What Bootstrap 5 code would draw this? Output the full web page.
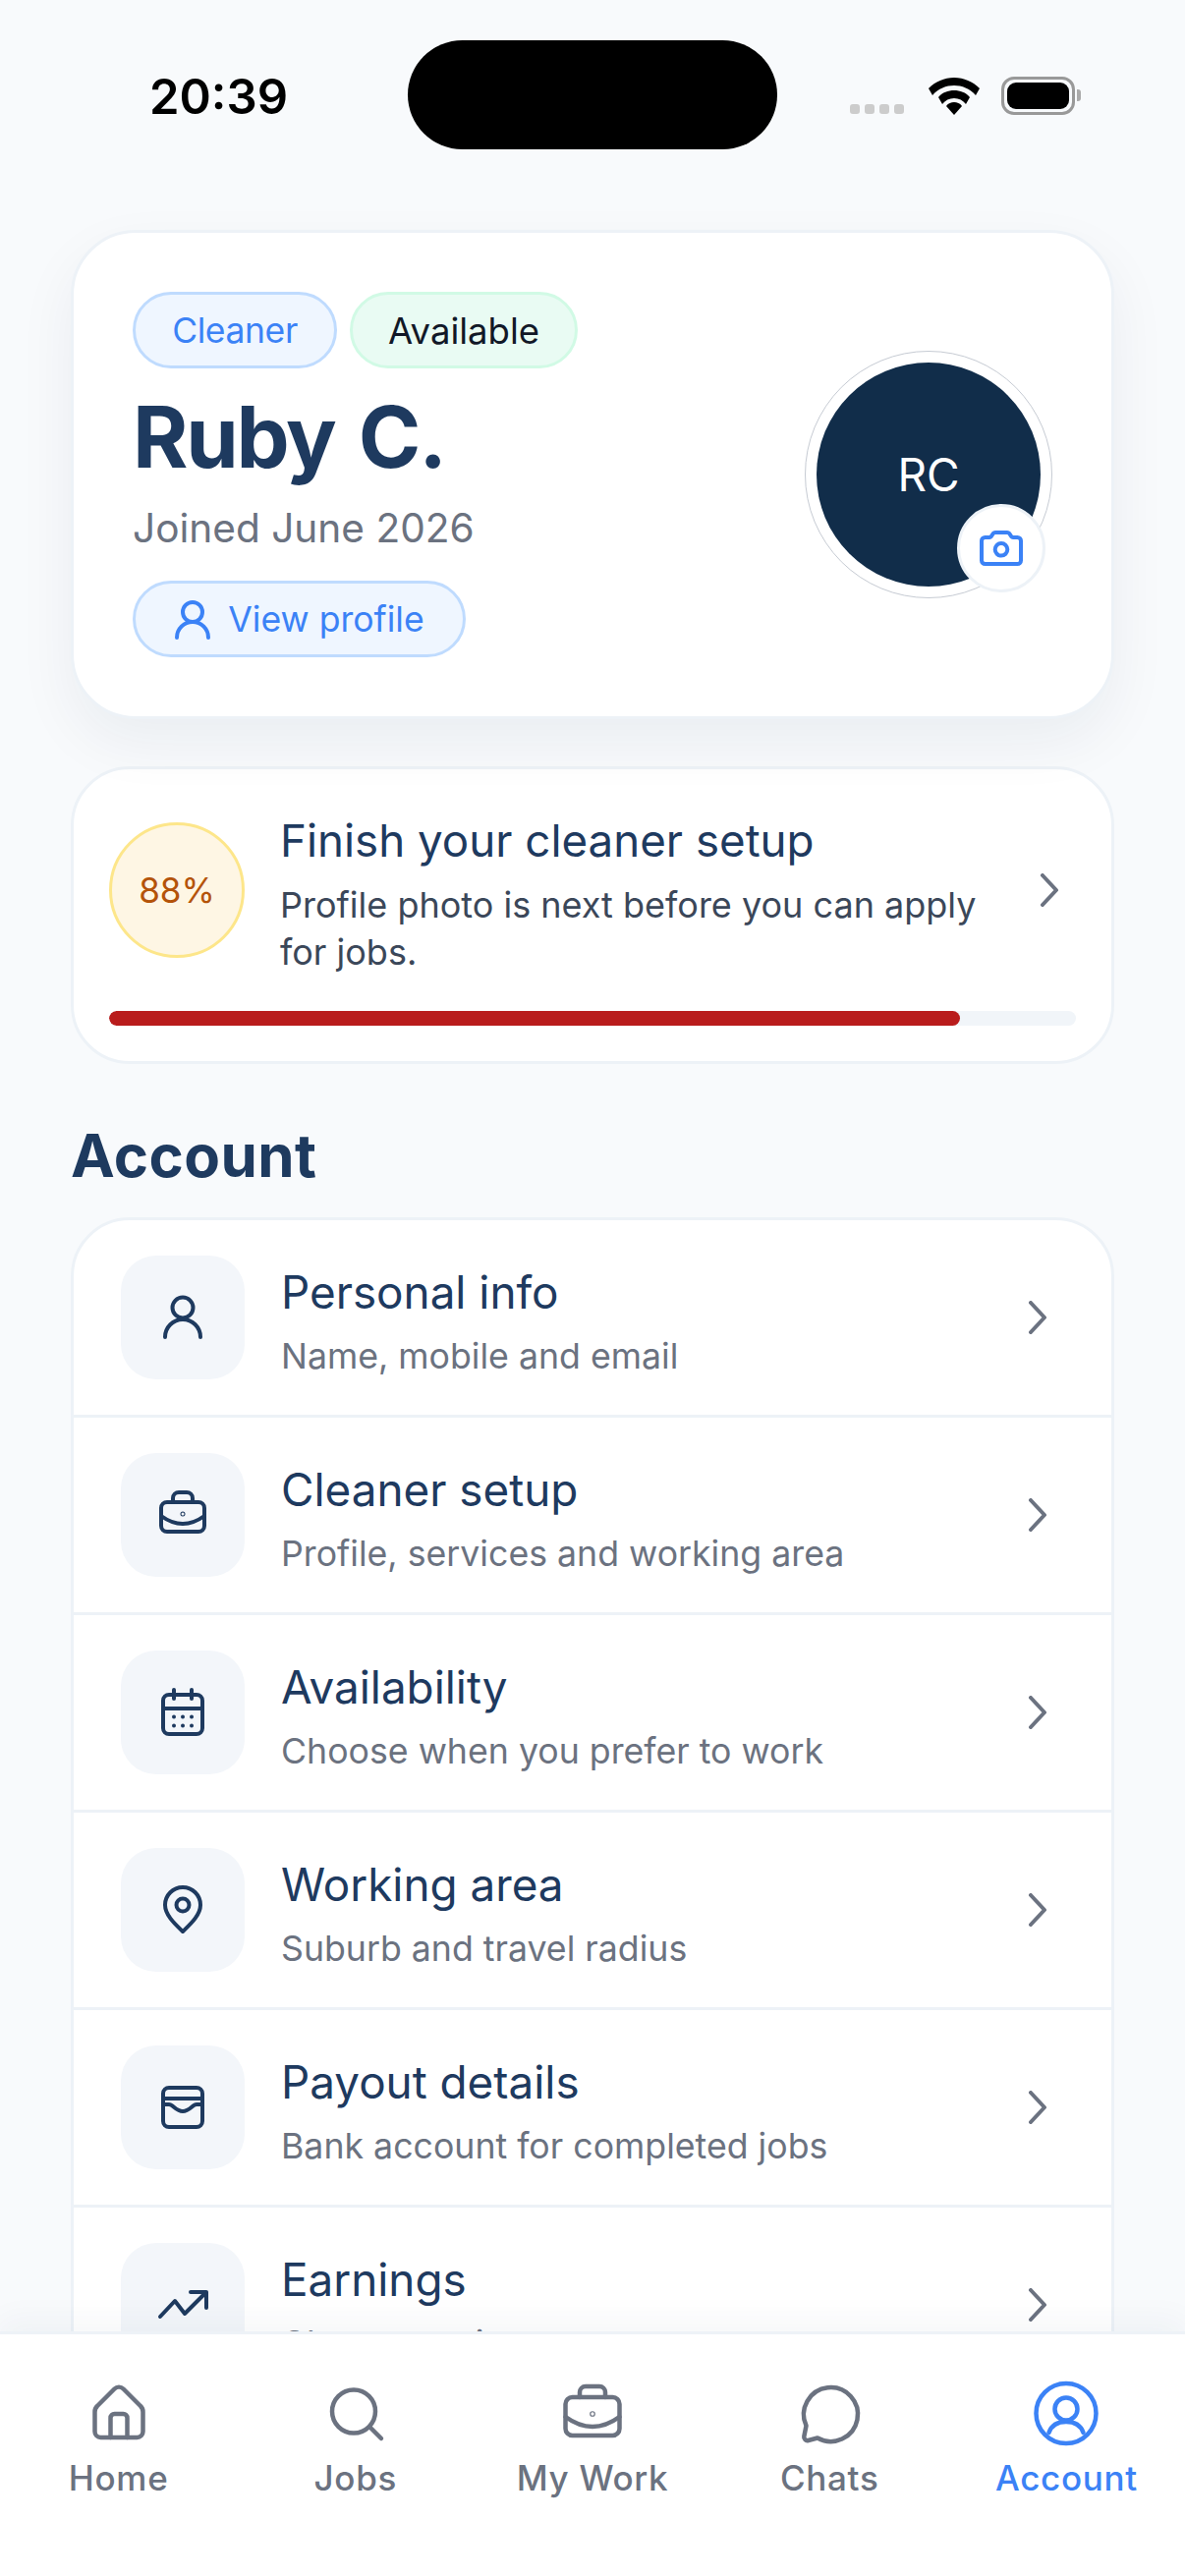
<!DOCTYPE html>
<html lang="en">
<head>
  <meta charset="UTF-8">
  <meta name="viewport" content="width=device-width, initial-scale=1.0">
  <title>Account</title>
  <link href="https://cdn.jsdelivr.net/npm/bootstrap@5.3.0/dist/css/bootstrap.min.css" rel="stylesheet">
  <style>
    body { background: #f8fafc; font-family: "Inter", "Liberation Sans", sans-serif; color: #1e3a5f; }
    svg { display: block; flex-shrink: 0; }
    .ico { fill: none; stroke: currentColor; stroke-width: 4; stroke-linecap: round; stroke-linejoin: round; }

    .phone { width: 1206px; height: 2622px; }
    .status-row { height: 160px; padding-top: 41px; }
    .time-slot { width: 415px; padding: 28px 0 0 152px; font-size: 49px; line-height: 60px; font-weight: 600; color: #000; }
    .island { width: 376px; height: 111px; border-radius: 56px; background: #000; }
    .status-icons { padding: 37px 0 0 74px; }
    .sig-dots { gap: 5px; margin: 28px 25px 0 0; }
    .sig-dots i { width: 10px; height: 10px; border-radius: 3px; background: #ccc; }
    .wifi { margin: 1px 22px 0 0; }
    .batt { width: 75px; height: 39px; border: 3px solid #999; border-radius: 13px; padding: 3px; }
    .batt i { display: block; height: 100%; background: #000; border-radius: 9px; }
    .batt-cap { width: 4px; height: 12px; margin: 13px 0 0 2px; background: #aaa; border-radius: 0 3px 3px 0; }

    .page-main { padding: 74px 72px 0; min-height: 0; }
    .hero { border: 3px solid #edf2f7; border-radius: 66px; padding: 60px; height: 498px; box-shadow: 0 24px 60px rgba(15, 42, 70, .06); margin-bottom: 48px; }
    .chip { display: inline-flex; align-items: center; justify-content: center; height: 78px; padding-top: 2px; border: 3px solid; border-radius: 39px; font-size: 36.5px; font-weight: 400; }
    .chip-blue { background: #eff6ff; border-color: #bfdbfe; color: #3b82f6; }
    .chip-green { background: #e9fbf3; border-color: #d1fae5; color: #111827; }
    .chip-role { width: 208px; font-size: 35.5px; letter-spacing: -.4px; }
    .chip-status { width: 232px; margin-left: 13px; }
    .chip-view { width: 339px; gap: 17px; font-size: 35.6px; }
    .hero-name { font-size: 86px; line-height: 100px; font-weight: 700; letter-spacing: -2.2px; word-spacing: 6px; margin: 20px 0 18px; color: #1e3a5f; }
    .hero-date { font-size: 40.6px; line-height: 50px; color: #6b7280; margin-bottom: 28px; }
    .avatar-ring { width: 252px; height: 252px; border: 1px solid #c6cbd3; border-radius: 50%; padding: 11px; }
    .avatar-disc { width: 100%; height: 100%; border-radius: 50%; background: #112d4a; color: #fff; font-size: 46px; }
    .cam-badge { width: 90px; height: 90px; right: 6px; bottom: 5px; background: #fff; border: 3px solid #edf2f7; border-radius: 50%; color: #3b82f6; }

    .setup-card { border: 3px solid #edf2f7; border-radius: 60px; background: #fff; padding: 43px 36px 36px; margin-bottom: 53px; }
    .pct { width: 138px; height: 138px; margin: 0 36px 7px 0; border: 3px solid #fde68a; border-radius: 50%; background: #fef6e4; color: #b45309; font-size: 35px; }
    .setup-title { font-size: 45.7px; line-height: 60px; margin-bottom: 11px; }
    .setup-sub { font-size: 36px; line-height: 48px; color: #3b4759; width: 744px; }
    .setup-chev { margin: 0 11px 7px auto; color: #6b7280; }
    .bar-track { height: 15px; margin-top: 36px; background: #f1f5f9; border-radius: 8px; }
    .bar-fill { background: #b91c1c; border-radius: 8px; }

    .section-head { font-size: 60px; line-height: 80px; font-weight: 700; letter-spacing: .4px; margin: 0 0 23px; color: #1e3a5f; }
    .menu-list { border: 3px solid #edf2f7; border-radius: 60px; background: #fff; }
    .menu-list .list-group-item { border: 0; border-bottom: 3px solid #edf2f7; background: transparent; padding: 36px 60px 36px 48px; height: 201px; display: flex; align-items: center; }
    .tile { width: 126px; height: 126px; border-radius: 36px; background: #f3f6fa; color: #1e3a5f; margin-right: 37px; }
    .row-text { padding-top: 7px; }
    .row-title { font-size: 45.8px; line-height: 60px; margin-bottom: 10px; color: #1e3a5f; }
    .row-sub { font-size: 35.7px; line-height: 48px; color: #6b7280; }
    .row-chev { margin-left: auto; color: #6b7280; }

    .tabbar { height: 249px; background: #fff; border-top: 3px solid #edf2f7; padding-top: 44px; box-shadow: 0 -12px 30px rgba(15, 42, 70, .04); }
    .tab { flex: 1 1 0; font-size: 35px; line-height: 44px; font-weight: 500; letter-spacing: .7px; color: #6b7280; }
    .tab span { margin-top: 8px; }
    .tab.is-active { color: #3b82f6; }
    .tab .ico { stroke-width: 4.5; }
  </style>
</head>
<body>
<div class="phone d-flex flex-column overflow-hidden">

  <div class="status-row d-flex flex-shrink-0">
    <div class="time-slot">20:39</div>
    <div class="island"></div>
    <div class="status-icons d-flex align-items-start">
      <div class="sig-dots d-flex"><i></i><i></i><i></i><i></i></div>
      <svg class="wifi" width="52" height="38" viewBox="0 0 52 38"><path d="M26 0C16 0 7 4 0 11l4 7C10 11 18 8 26 8s16 3 22 10l4-7C45 4 36 0 26 0Z"/><path d="M26 13c-6 0-12 2-16 7l4 7c3-4 7-6 12-6s9 2 12 6l4-7c-4-5-10-7-16-7Z"/><path d="M26 25c-3 0-6 1-8 4l8 9 8-9c-2-3-5-4-8-4Z"/></svg>
      <div class="d-flex">
        <div class="batt"><i></i></div>
        <div class="batt-cap"></div>
      </div>
    </div>
  </div>

  <main class="page-main flex-grow-1 overflow-hidden">
    <div class="card hero flex-row justify-content-between align-items-center">
      <div>
        <div class="d-flex">
          <span class="chip chip-blue chip-role">Cleaner</span>
          <span class="chip chip-green chip-status">Available</span>
        </div>
        <h1 class="hero-name">Ruby C.</h1>
        <div class="hero-date">Joined June 2026</div>
        <a class="chip chip-blue chip-view text-decoration-none">
          <svg class="ico" width="38" height="44" viewBox="0 0 38 44"><circle cx="19" cy="14" r="10"/><path d="M3 40a16 16 0 0 1 32 0"/></svg>
          <span>View profile</span>
        </a>
      </div>
      <div class="avatar-ring position-relative">
        <div class="avatar-disc d-flex align-items-center justify-content-center">RC</div>
        <div class="cam-badge position-absolute d-flex align-items-center justify-content-center">
          <svg class="ico" width="46" height="40" viewBox="0 0 46 40"><path d="M6.500 9H11a2 2 0 0 0 1.700-.9l2-3A3 3 0 0 1 17.200 4h11.600a3 3 0 0 1 2.500 1.100l2 3a2 2 0 0 0 1.700.9h4.500a3.500 3.500 0 0 1 3.500 3.500v20a3.500 3.500 0 0 1-3.500 3.500h-33A3.500 3.500 0 0 1 3 32.500v-20A3.500 3.500 0 0 1 6.500 9Z"/><circle cx="23" cy="21.300" r="6.300"/></svg>
        </div>
      </div>
    </div>

    <div class="setup-card">
      <div class="d-flex align-items-center">
        <div class="pct flex-shrink-0 d-flex align-items-center justify-content-center">88%</div>
        <div>
          <div class="setup-title">Finish your cleaner setup</div>
          <div class="setup-sub">Profile photo is next before you can apply for jobs.</div>
        </div>
        <svg class="ico setup-chev" width="30" height="34" viewBox="0 0 30 34"><path d="M7 2l14 15L7 32"/></svg>
      </div>
      <div class="progress bar-track">
        <div class="progress-bar bar-fill" style="width: 88%"></div>
      </div>
    </div>

    <h2 class="section-head">Account</h2>
    <div class="list-group menu-list">
      <div class="list-group-item">
        <div class="tile d-flex align-items-center justify-content-center">
          <svg class="ico" width="60" height="60" viewBox="0 0 60 60"><circle cx="30" cy="20" r="10.5"/><path d="M12 50a18 18 0 0 1 36 0"/></svg>
        </div>
        <div class="row-text"><div class="row-title">Personal info</div><div class="row-sub">Name, mobile and email</div></div>
        <svg class="ico row-chev" width="30" height="34" viewBox="0 0 30 34"><path d="M8 2l14 15L8 32"/></svg>
      </div>
      <div class="list-group-item">
        <div class="tile d-flex align-items-center justify-content-center">
          <svg class="ico" width="60" height="60" viewBox="0 0 60 60"><rect x="8" y="17" width="44" height="30" rx="6"/><path d="M20 17v-4a6 6 0 0 1 6-6h8a6 6 0 0 1 6 6v4"/><path d="M8 31Q30 47 52 31"/><circle cx="30" cy="29" r=".5"/></svg>
        </div>
        <div class="row-text"><div class="row-title">Cleaner setup</div><div class="row-sub">Profile, services and working area</div></div>
        <svg class="ico row-chev" width="30" height="34" viewBox="0 0 30 34"><path d="M8 2l14 15L8 32"/></svg>
      </div>
      <div class="list-group-item">
        <div class="tile d-flex align-items-center justify-content-center">
          <svg class="ico" width="60" height="60" viewBox="0 0 60 60"><rect x="10" y="12" width="40" height="40" rx="6"/><path d="M21 7v9M39 7v9M10 26h40"/><path d="M21 34.500h.01M30 34.500h.01M39 34.500h.01M21 43.500h.01M30 43.500h.01M39 43.500h.01"/></svg>
        </div>
        <div class="row-text"><div class="row-title">Availability</div><div class="row-sub">Choose when you prefer to work</div></div>
        <svg class="ico row-chev" width="30" height="34" viewBox="0 0 30 34"><path d="M8 2l14 15L8 32"/></svg>
      </div>
      <div class="list-group-item">
        <div class="tile d-flex align-items-center justify-content-center">
          <svg class="ico" width="60" height="60" viewBox="0 0 60 60"><path d="M30 52C24 46 12 36 12 25a18 18 0 0 1 36 0C48 36 36 46 30 52Z"/><circle cx="30" cy="25" r="6.500"/></svg>
        </div>
        <div class="row-text"><div class="row-title">Working area</div><div class="row-sub">Suburb and travel radius</div></div>
        <svg class="ico row-chev" width="30" height="34" viewBox="0 0 30 34"><path d="M8 2l14 15L8 32"/></svg>
      </div>
      <div class="list-group-item">
        <div class="tile d-flex align-items-center justify-content-center">
          <svg class="ico" width="60" height="60" viewBox="0 0 60 60"><rect x="10" y="10" width="40" height="40" rx="6"/><path d="M10 21h40"/><path d="M10 27h6c4 0 7 7 14 7s10-7 14-7h6"/></svg>
        </div>
        <div class="row-text"><div class="row-title">Payout details</div><div class="row-sub">Bank account for completed jobs</div></div>
        <svg class="ico row-chev" width="30" height="34" viewBox="0 0 30 34"><path d="M8 2l14 15L8 32"/></svg>
      </div>
      <div class="list-group-item">
        <div class="tile d-flex align-items-center justify-content-center">
          <svg class="ico" width="60" height="60" viewBox="0 0 60 60"><path d="M7 42l15-16 10 13 22-22M38 17h16v16"/></svg>
        </div>
        <div class="row-text"><div class="row-title">Earnings</div><div class="row-sub">Charts earnings summary</div></div>
        <svg class="ico row-chev" width="30" height="34" viewBox="0 0 30 34"><path d="M8 2l14 15L8 32"/></svg>
      </div>
    </div>
  </main>

  <nav class="tabbar d-flex flex-shrink-0 position-relative">
    <div class="tab d-flex flex-column align-items-center">
      <svg class="ico" width="72" height="72" viewBox="0 0 72 72"><path d="M31.500 11.500 14 29a8 8 0 0 0-2.500 6v20a6 6 0 0 0 6 6h37a6 6 0 0 0 6-6V35a8 8 0 0 0-2.500-6L40.500 11.500a6.400 6.400 0 0 0-9 0Z"/><path d="M27.500 61V41a4 4 0 0 1 4-4h9a4 4 0 0 1 4 4v20"/></svg>
      <span>Home</span>
    </div>
    <div class="tab d-flex flex-column align-items-center">
      <svg class="ico" width="72" height="72" viewBox="0 0 72 72"><circle cx="34" cy="34.500" r="22"/><path d="M50.500 50.500 62 62"/></svg>
      <span>Jobs</span>
    </div>
    <div class="tab d-flex flex-column align-items-center">
      <svg class="ico" width="72" height="72" viewBox="0 0 72 72"><rect x="8.500" y="20" width="55" height="39" rx="7"/><path d="M23 20v-5a6 6 0 0 1 6-6h14a6 6 0 0 1 6 6v5"/><path d="M8.500 40Q36 60 63.500 40"/><circle cx="36" cy="37" r=".6"/></svg>
      <span>My Work</span>
    </div>
    <div class="tab d-flex flex-column align-items-center">
      <svg class="ico" width="72" height="72" viewBox="0 0 72 72"><path d="M24 61.500A27.500 27.500 0 1 0 12.500 49L10.300 60a3.500 3.500 0 0 0 4.300 4Z"/></svg>
      <span>Chats</span>
    </div>
    <div class="tab is-active d-flex flex-column align-items-center">
      <svg class="ico" width="72" height="72" viewBox="0 0 72 72"><circle cx="36" cy="36.500" r="30.500"/><circle cx="36" cy="32" r="11.500"/><path d="M18.500 56C21 49 27 45 36 45s15 4 17.500 11"/></svg>
      <span>Account</span>
    </div>
  </nav>
</div>
<script src="https://cdn.jsdelivr.net/npm/bootstrap@5.3.0/dist/js/bootstrap.bundle.min.js"></script>
</body>
</html>
